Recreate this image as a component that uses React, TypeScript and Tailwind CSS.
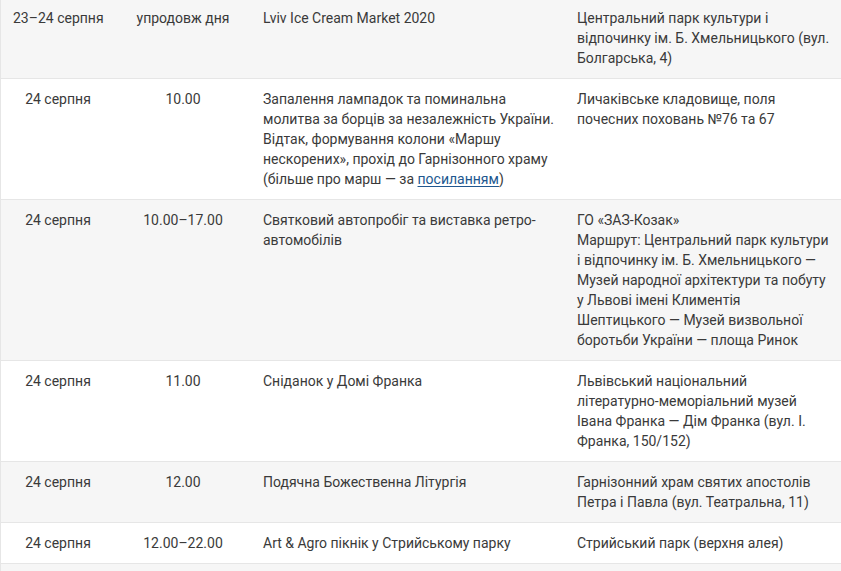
import React from "react";

type Row = {
  date: string;
  time: string;
  event: React.ReactNode[];
  place: React.ReactNode[];
};

const rows: Row[] = [
  {
    date: "23–24 серпня",
    time: "упродовж дня",
    event: ["Lviv Ice Cream Market 2020"],
    place: ["Центральний парк культури і", "відпочинку ім. Б. Хмельницького (вул.", "Болгарська, 4)"],
  },
  {
    date: "24 серпня",
    time: "10.00",
    event: [
      "Запалення лампадок та поминальна",
      "молитва за борців за незалежність України.",
      "Відтак, формування колони «Маршу",
      "нескорених», прохід до Гарнізонного храму",
      <>
        (більше про марш — за{" "}
        <a href="#" className="text-[#21578f] underline underline-offset-2">
          посиланням
        </a>
        )
      </>,
    ],
    place: ["Личаківське кладовище, поля", "почесних поховань №76 та 67"],
  },
  {
    date: "24 серпня",
    time: "10.00–17.00",
    event: ["Святковий автопробіг та виставка ретро-", "автомобілів"],
    place: [
      "ГО «ЗАЗ-Козак»",
      "Маршрут: Центральний парк культури",
      "і відпочинку ім. Б. Хмельницького —",
      "Музей народної архітектури та побуту",
      "у Львові імені Климентія",
      "Шептицького — Музей визвольної",
      "боротьби України — площа Ринок",
    ],
  },
  {
    date: "24 серпня",
    time: "11.00",
    event: ["Сніданок у Домі Франка"],
    place: ["Львівський національний", "літературно-меморіальний музей", "Івана Франка — Дім Франка (вул. І.", "Франка, 150/152)"],
  },
  {
    date: "24 серпня",
    time: "12.00",
    event: ["Подячна Божественна Літургія"],
    place: ["Гарнізонний храм святих апостолів", "Петра і Павла (вул. Театральна, 11)"],
  },
  {
    date: "24 серпня",
    time: "12.00–22.00",
    event: ["Art & Agro пікнік у Стрийському парку"],
    place: ["Стрийський парк (верхня алея)"],
  },
  { date: "", time: "", event: [""], place: [""] },
];

function Lines({ items }: { items: React.ReactNode[] }) {
  return (
    <>
      {items.map((l, i) => (
        <div key={i} className="whitespace-nowrap">
          {l}
        </div>
      ))}
    </>
  );
}

export default function App() {
  return (
    <div className="h-[571px] w-[841px] overflow-hidden bg-white">
      <div
        className="-mt-[2px] border-l border-[#e6e6e6] text-[14px] leading-[20px] text-[#3a3a3a]"
        style={{ fontFamily: "Roboto, 'Noto Sans', sans-serif" }}
      >
        {rows.map((r, i) => (
          <div
            key={i}
            className={`grid grid-cols-[114px_136px_314px_1fr] border-b border-[#e6e6e6] ${
              i % 2 === 0 ? "bg-[#f6f6f6]" : "bg-white"
            }`}
          >
            <div className="px-3 py-[10px] text-center whitespace-nowrap">{r.date}</div>
            <div className="px-3 py-[10px] text-center whitespace-nowrap">{r.time}</div>
            <div className="px-3 py-[10px]">
              <Lines items={r.event} />
            </div>
            <div className="px-3 py-[10px]">
              <Lines items={r.place} />
            </div>
          </div>
        ))}
      </div>
    </div>
  );
}
